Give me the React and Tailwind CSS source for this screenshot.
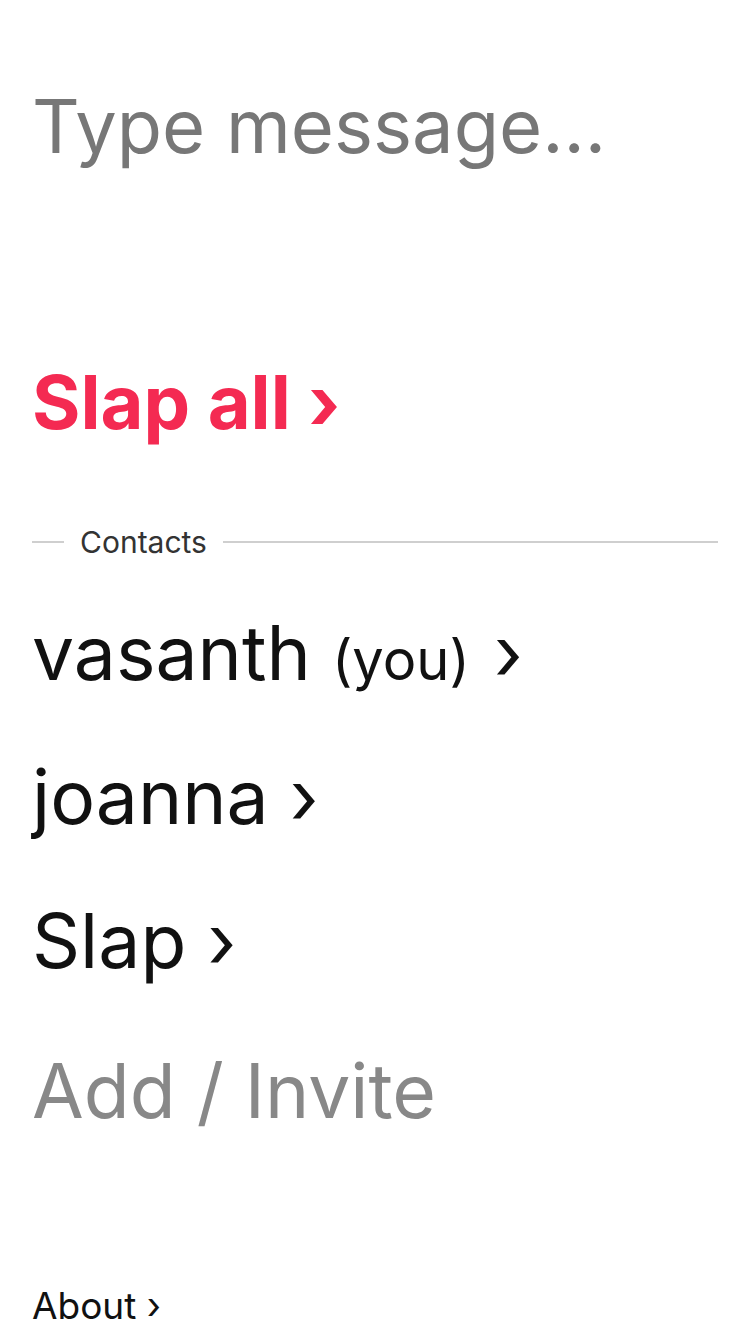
import React from "react";

export default function App() {
  const font = { fontFamily: "Inter, 'Noto Sans', sans-serif" };
  return (
    <div className="w-[750px] min-h-[1334px] bg-white overflow-hidden" style={font}>
      <div className="px-[32px]">
        <div className="pt-[76px]">
          <input
            type="text"
            placeholder="Type message..."
            className="block w-full bg-transparent outline-none text-[74px] leading-[100px] h-[100px] text-[#111] placeholder:text-[#777] p-0 border-0"
            style={font}
          />
        </div>
        <div className="mt-[186px]">
          <button className="block text-[74px] leading-[80px] h-[80px] font-bold text-[#f42a52] p-0">
            Slap all ›
          </button>
        </div>
        <div className="flex items-center gap-[16px] h-[40px] mt-[80px]">
          <div className="w-[32px] h-[2px] bg-[#cfcfcf]" />
          <span className="text-[30px] leading-[32px] text-[#333]">Contacts</span>
          <div className="flex-1 h-[2px] bg-[#cfcfcf]" />
        </div>
        <ul className="mt-[19px]">
          <li className="h-[144px] leading-[144px] text-[75px] text-[#111] whitespace-nowrap">
            vasanth <span className="text-[56px] mr-[3px]">(you)</span> ›
          </li>
          <li className="h-[144px] leading-[144px] text-[75px] text-[#111]">joanna ›</li>
          <li className="h-[144px] leading-[144px] text-[75px] text-[#111]">Slap ›</li>
          <li className="mt-[6px] h-[144px] leading-[144px] text-[75px] text-[#888]">
            Add / Invite
          </li>
        </ul>
        <div className="mt-[121px] text-[37px] leading-[44px] text-[#111]">About ›</div>
      </div>
    </div>
  );
}
